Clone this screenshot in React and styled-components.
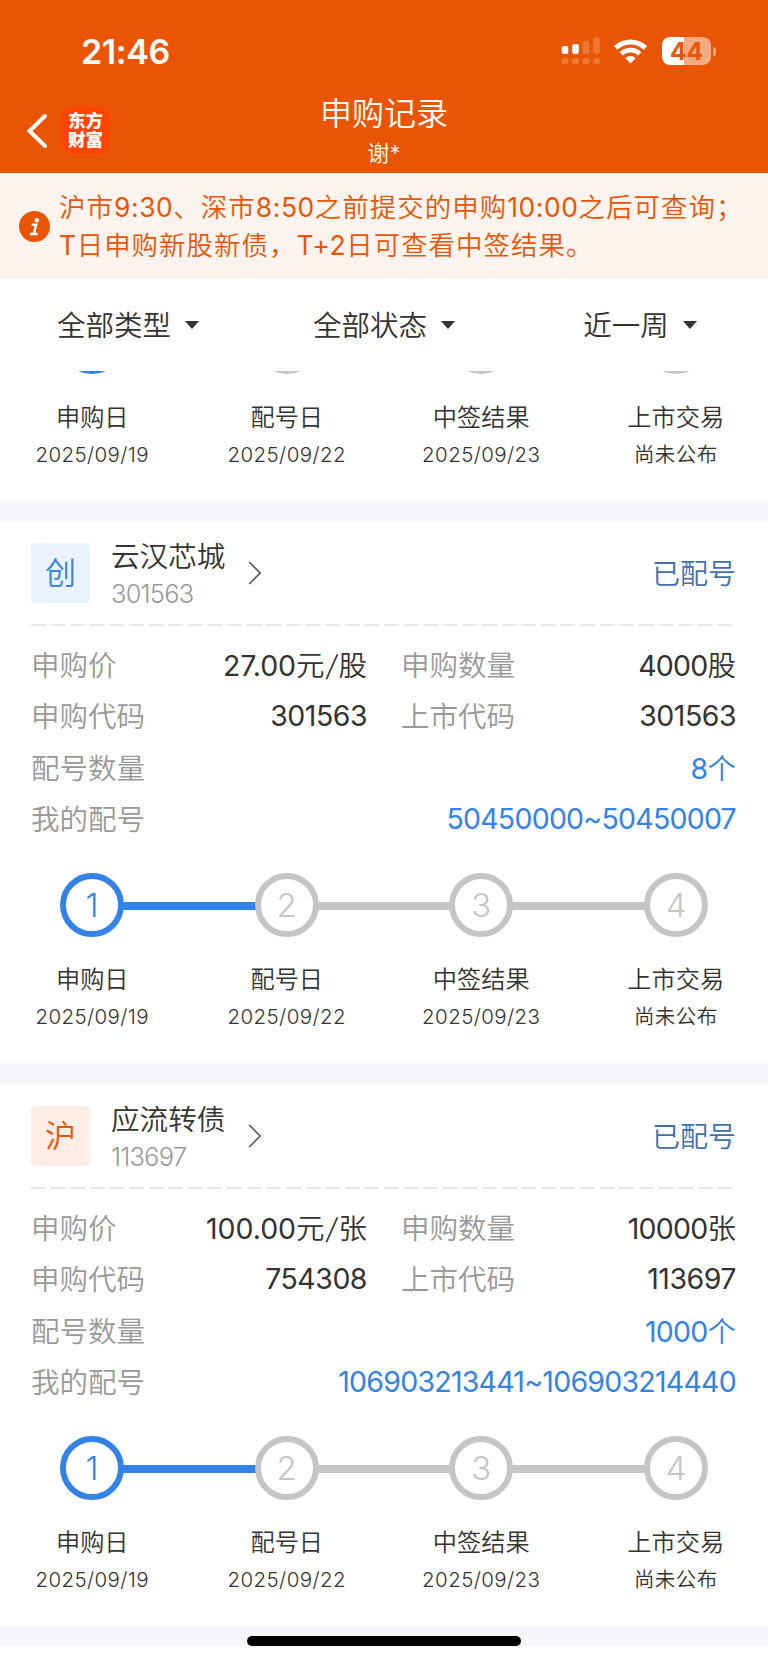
import React from "react";
import styled, { createGlobalStyle } from "styled-components";

const ORANGE = "#ea5504";
const BLUE = "#3382e6";
const GREY = "#c5c5c5";

//Data
const filters = ["全部类型", "全部状态", "近一周"];

const steps = [
  { name: "申购日", date: "2025/09/19", done: true },
  { name: "配号日", date: "2025/09/22" },
  { name: "中签结果", date: "2025/09/23" },
  { name: "上市交易", date: "尚未公布" },
];

const records = [
  {
    market: "创",
    tint: "#e9f2fd",
    color: BLUE,
    name: "云汉芯城",
    code: "301563",
    price: "27.00元/股",
    amount: "4000股",
    applyCode: "301563",
    count: "8个",
    numbers: "50450000~50450007",
  },
  {
    market: "沪",
    tint: "#fdede5",
    color: ORANGE,
    name: "应流转债",
    code: "113697",
    price: "100.00元/张",
    amount: "10000张",
    applyCode: "754308",
    count: "1000个",
    numbers: "106903213441~106903214440",
  },
];

const Mixed = ({ text, gap }) =>
  text.split(/([\d.~:+T]+|\/)/).map((part, i) => {
    if (part === "/") return <Slash key={i}>/</Slash>;
    return i % 2 ? (
      <Digits key={i} $gap={gap}>
        {part}
      </Digits>
    ) : (
      part
    );
  });

const Signal = () => (
  <svg width="39" height="28" viewBox="0 0 39 28" fill="#fff">
    <rect x="0.7" y="9" width="6.6" height="8" rx="2" />
    <rect x="11.2" y="7" width="6.6" height="10" rx="2" />
    <g opacity="0.2">
      <rect x="21.7" y="3.7" width="6.6" height="13.3" rx="2" />
      <rect x="32.2" y="0.6" width="6.6" height="16.4" rx="2" />
      {[0.7, 11.2, 21.7, 32.2].map((x) => (
        <rect key={x} x={x} y="21" width="6.6" height="6.4" rx="2" />
      ))}
    </g>
  </svg>
);

const Wifi = () => (
  <svg width="33" height="25" viewBox="0 0 33 25">
    <defs>
      <clipPath id="wedge">
        <path d="M16.5 24.5 L-3 4 V-4 H36 V4 Z" />
      </clipPath>
    </defs>
    <g clipPath="url(#wedge)" fill="none" stroke="#fff">
      <circle cx="16.5" cy="24.5" r="21.6" strokeWidth="5" />
      <circle cx="16.5" cy="24.5" r="13.3" strokeWidth="4.8" />
      <circle cx="16.5" cy="24.5" r="3.8" strokeWidth="7.6" />
    </g>
  </svg>
);

const StepBar = ({ blank }) => (
  <>
    <Track>
      {steps.map((step, i) => (
        <React.Fragment key={step.name}>
          {i > 0 && <Line $done={steps[i - 1].done} />}
          <Circle $done={step.done}>{!blank && i + 1}</Circle>
        </React.Fragment>
      ))}
    </Track>
    <StepLabels>
      {steps.map((step) => (
        <StepLabel key={step.name}>
          <h4>{step.name}</h4>
          <p>{step.date}</p>
        </StepLabel>
      ))}
    </StepLabels>
  </>
);

const RecordCard = ({ record }) => (
  <Card>
    <CardHead>
      <Market $tint={record.tint} $color={record.color}>
        {record.market}
      </Market>
      <Stock>
        <h3>{record.name}</h3>
        <p>{record.code}</p>
      </Stock>
      <svg width="14" height="24" viewBox="0 0 14 24" fill="none" stroke="#555" strokeWidth="1.6">
        <path d="M1.2 1 L12.2 12 L1.2 23" />
      </svg>
      <Status>已配号</Status>
    </CardHead>
    <Divider />
    <Fields>
      <Field>
        <Label>申购价</Label>
        <Value><Mixed gap="-0.05px" text={record.price} /></Value>
      </Field>
      <Field>
        <Label>申购数量</Label>
        <Value><Mixed text={record.amount} /></Value>
      </Field>
      <Field>
        <Label>申购代码</Label>
        <Value><Mixed gap="-0.5px" text={record.applyCode} /></Value>
      </Field>
      <Field>
        <Label>上市代码</Label>
        <Value><Mixed gap="-0.5px" text={record.code} /></Value>
      </Field>
      <Field $wide>
        <Label>配号数量</Label>
        <Value $link><Mixed text={record.count} /></Value>
      </Field>
      <Field $wide>
        <Label>我的配号</Label>
        <Value $link><Mixed text={record.numbers} /></Value>
      </Field>
    </Fields>
    <StepBar />
  </Card>
);

const App = () => {
  return (
    <Page>
      <GlobalStyle />
      <Header>
        <StatusBar>
          <Clock>21:46</Clock>
          <Signal />
          <Wifi />
          <Battery>44</Battery>
          <BatteryTip />
        </StatusBar>
        <NavBar>
          <NavLeft>
            <svg width="22" height="36" viewBox="0 0 22 36" fill="none" stroke="#fff" strokeWidth="4" strokeLinecap="round">
              <path d="M19 3 L3.5 18 L19 33" />
            </svg>
            <Logo>
              <span>东方</span>
              <span>财富</span>
            </Logo>
          </NavLeft>
          <Title>
            <h1>申购记录</h1>
            <p>谢*</p>
          </Title>
        </NavBar>
      </Header>
      <Notice>
        <svg width="31" height="31" viewBox="0 0 31 31">
          <circle cx="15.5" cy="15.5" r="15.5" fill={ORANGE} />
          <circle cx="17.8" cy="9.2" r="2.2" fill="#fff" />
          <path d="M12.6 13.8 H17.2 L14.9 22.8 M11 23 H18.6" fill="none" stroke="#fff" strokeWidth="2.4" />
        </svg>
        <p>
          <Mixed gap="0.6px" text="沪市9:30、深市8:50之前提交的申购10:00之后可查询；" />
          <br />
          <Mixed gap="0.6px" text="T日申购新股新债，T+2日可查看中签结果。" />
        </p>
      </Notice>
      <Filters>
        {filters.map((name) => (
          <Filter key={name}>
            {name}
            <Caret />
          </Filter>
        ))}
      </Filters>
      <List>
        <ScrolledCard>
          <StepBar blank />
        </ScrolledCard>
        {records.map((record) => (
          <RecordCard key={record.code} record={record} />
        ))}
      </List>
      <Bottom>
        <HomeBar />
      </Bottom>
    </Page>
  );
};

const GlobalStyle = createGlobalStyle`
  * {
    box-sizing: border-box;
    margin: 0;
    padding: 0;
  }
  body {
    background: white;
    color: #333;
    font-family: Inter, "Noto Sans CJK SC", sans-serif;
    font-weight: 350;
  }
  h1, h3, h4 {
    font-weight: 350;
  }
  svg {
    display: block;
    flex: none;
  }
`;

const Page = styled.div`
  width: 768px;
  height: 1663px;
  display: flex;
  flex-direction: column;
  overflow: hidden;
`;

const Digits = styled.span`
  font-weight: 370;
  letter-spacing: ${(props) => props.$gap || "-0.75px"};
`;

const Slash = styled.span`
  display: inline-block;
  padding: 0 0.07em;
  line-height: 1;
  transform: skewX(-10deg);
`;

const Header = styled.header`
  height: 173px;
  flex: none;
  background: ${ORANGE};
  color: white;
`;

const StatusBar = styled.div`
  height: 89px;
  padding: 13px 52px 0 81px;
  display: flex;
  align-items: center;
`;

const Clock = styled.div`
  flex: 1;
  font-size: 34px;
  font-weight: 600;
  letter-spacing: -0.4px;
  & + svg {
    margin-right: 14px;
  }
`;

const Battery = styled.div`
  width: 49px;
  height: 28px;
  margin-left: 15px;
  border-radius: 8px;
  background: linear-gradient(90deg, #fff 22px, rgba(255, 255, 255, 0.5) 22px);
  color: ${ORANGE};
  font-size: 24.5px;
  line-height: 28px;
  font-weight: 700;
  text-align: center;
`;

const BatteryTip = styled.div`
  width: 3px;
  height: 9px;
  margin-left: 2px;
  border-radius: 0 4px 4px 0;
  background: rgba(255, 255, 255, 0.5);
`;

const NavBar = styled.div`
  height: 84px;
  display: grid;
  grid-template-columns: 1fr auto 1fr;
`;

const NavLeft = styled.div`
  height: 83px;
  padding-left: 26px;
  display: flex;
  align-items: center;
  gap: 14px;
`;

const Logo = styled.div`
  width: 47px;
  height: 47px;
  margin-top: -1px;
  padding-top: 4px;
  border-radius: 10px;
  background: #ff4400;
  font-size: 17.5px;
  font-weight: 900;
  line-height: 19px;
  text-align: center;
  span {
    display: block;
  }
`;

const Title = styled.div`
  padding-top: 1px;
  text-align: center;
  h1 {
    font-size: 32px;
    line-height: 48px;
  }
  p {
    font-size: 22px;
    line-height: 30px;
  }
`;

const Notice = styled.div`
  height: 106px;
  flex: none;
  padding: 16px 0 0 19px;
  display: flex;
  gap: 9px;
  background: #fef4ef;
  color: ${ORANGE};
  svg {
    margin-top: 22px;
  }
  p {
    font-size: 26.4px;
    line-height: 37.6px;
    letter-spacing: 1.1px;
    white-space: nowrap;
  }
`;

const Filters = styled.div`
  height: 92px;
  flex: none;
  padding-bottom: 3px;
  display: grid;
  grid-template-columns: repeat(3, 1fr);
`;

const Filter = styled.div`
  display: flex;
  align-items: center;
  justify-content: center;
  gap: 14px;
  font-size: 28.5px;
`;

const Caret = styled.span`
  margin-top: 3px;
  border: 7px solid transparent;
  border-top: 8px solid #333;
  border-bottom: 0;
`;

const List = styled.main`
  height: 1276px;
  flex: none;
  overflow: hidden;
  display: flex;
  flex-direction: column;
  gap: 22px;
  background: #f6f7fa;
`;

const Card = styled.section`
  height: 541px;
  flex: none;
  padding-top: 21px;
  background: white;
`;

const CardHead = styled.div`
  height: 60px;
  padding: 0 32px 0 31px;
  display: flex;
  align-items: center;
`;

const Market = styled.div`
  width: 59px;
  height: 60px;
  border-radius: 4px;
  background: ${(props) => props.$tint};
  color: ${(props) => props.$color};
  font-size: 31px;
  line-height: 59px;
  text-align: center;
`;

const Stock = styled.div`
  margin: 3px 23px 0 21px;
  h3 {
    font-size: 28.6px;
    line-height: 38px;
  }
  p {
    color: #999;
    font-size: 25.5px;
    line-height: 36px;
    letter-spacing: -0.8px;
  }
`;

const Status = styled.div`
  margin: -2px 0 0 auto;
  color: #4170b0;
  font-size: 28px;
`;

const Divider = styled.div`
  height: 2px;
  margin: 21px 34px 0 31px;
  background: repeating-linear-gradient(90deg, #e8e8e8 0 15px, transparent 15px 19.61px);
`;

const Fields = styled.div`
  height: 206px;
  margin: 12px 32px 0 31px;
  display: grid;
  grid-template-columns: 336px 335px;
  grid-auto-rows: 51.5px;
  justify-content: space-between;
`;

const Field = styled.div`
  grid-column: ${(props) => (props.$wide ? "1 / -1" : "auto")};
  display: flex;
  align-items: center;
  justify-content: space-between;
  font-size: 28.5px;
`;

const Label = styled.span`
  margin-top: -1px;
  color: #999;
`;

const Value = styled.span`
  color: ${(props) => (props.$link ? BLUE : "#333")};
`;

const Track = styled.div`
  padding: 0 60px;
  display: flex;
  align-items: center;
  ${Fields} + & {
    margin-top: 29px;
  }
`;

const Circle = styled.div`
  width: 64px;
  height: 64px;
  flex: none;
  border: 6px solid ${(props) => (props.$done ? BLUE : GREY)};
  border-radius: 50%;
  color: ${(props) => (props.$done ? BLUE : GREY)};
  font-size: 33px;
  font-weight: 300;
  line-height: 52px;
  text-align: center;
`;

const Line = styled.div`
  height: 8px;
  flex: 1;
  margin: 2px -1px 0;
  background: ${(props) => (props.$done ? BLUE : GREY)};
`;

const StepLabels = styled.div`
  margin: 24px -5px 0;
  display: grid;
  grid-template-columns: repeat(4, 1fr);
  text-align: center;
`;

const StepLabel = styled.div`
  h4 {
    font-size: 24.2px;
    line-height: 37px;
  }
  p {
    font-size: 20.5px;
    line-height: 37px;
    letter-spacing: 0.4px;
  }
`;

//Only the lower end of this card shows under the filter bar
const ScrolledCard = styled(Card)`
  height: 191px;
  margin-top: -61px;
  padding-top: 0;
  & + section {
    margin-top: -1px;
  }
  ${StepLabels} {
    margin-top: 25px;
  }
`;

const Bottom = styled.footer`
  flex: 1;
  display: flex;
  justify-content: center;
  align-items: flex-start;
`;

const HomeBar = styled.div`
  width: 274px;
  height: 10px;
  margin-top: -11px;
  border-radius: 5px;
  background: black;
`;

export default App;
